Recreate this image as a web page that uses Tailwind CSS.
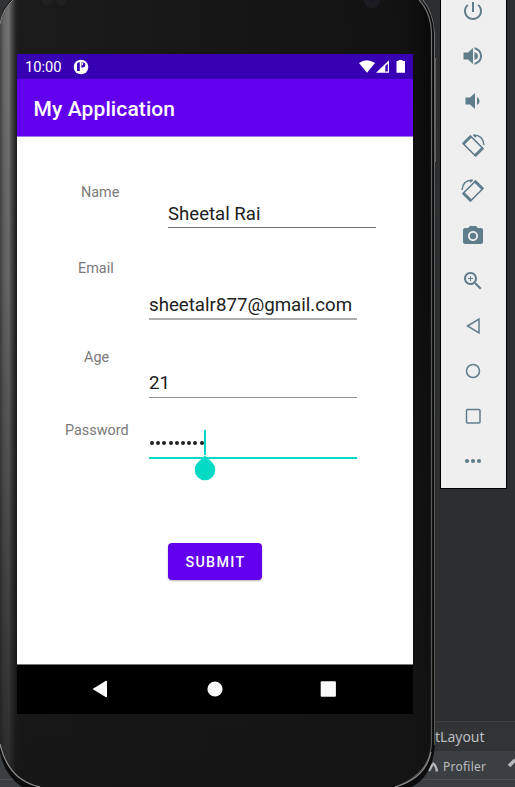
<!DOCTYPE html>
<html lang="en">
<head>
<meta charset="utf-8">
<title>My Application</title>
<script src="https://cdn.jsdelivr.net/npm/@tailwindcss/browser@4"></script>
</head>
<body class="relative w-[515px] h-[787px] overflow-hidden bg-[#2d2e30] font-['Roboto',sans-serif]">

<!-- IDE window behind the emulator -->
<div class="flex flex-col justify-end h-full font-['Noto_Sans',sans-serif] text-[#bbbdbf]">
  <div class="h-[30px] border-t border-[#3f4042] bg-[#313335] flex items-center pl-[435px] text-[14px] leading-none"><span>tLayout</span></div>
  <div class="h-[28px] bg-[#3c3f41] flex items-center pl-[427px] pt-[3px] text-[12px] leading-none">
    <svg class="w-[12px] h-[14px] shrink-0" viewBox="0 0 12 14" fill="none" stroke="#b4b8ba" stroke-width="2.400"><path d="M2 11L5.500 4.500M5.500 3Q9 5 10 11.500"/></svg>
    <span class="ml-[4px] tracking-[0.250px]">Profiler</span>
    <svg class="w-[8px] h-[14px] ml-auto mb-[5px] shrink-0" viewBox="0 0 8 14" fill="none" stroke="#b4b8ba" stroke-width="3.500"><path d="M2 9L8 3"/></svg>
  </div>
  <div class="h-[8px] border-t border-[#4d4f50] bg-[#3c3f41]"></div>
</div>

<!-- Phone body -->
<svg class="absolute inset-0" width="440" height="787" viewBox="0 0 440 787">
  <defs>
    <linearGradient id="side" x1="0" x2="432" y1="0" y2="0" gradientUnits="userSpaceOnUse">
      <stop offset="0" stop-color="#444"/><stop offset=".009" stop-color="#686868"/><stop offset=".020" stop-color="#747474"/><stop offset=".028" stop-color="#484848"/><stop offset=".037" stop-color="#222"/><stop offset=".045" stop-color="#1b1b1b"/><stop offset=".94" stop-color="#121212"/><stop offset="1" stop-color="#080808"/>
    </linearGradient>
    <linearGradient id="fade" x1="0" x2="0" y1="0" y2="1">
      <stop offset="0" stop-color="#1a1a1a" stop-opacity="0"/><stop offset=".35" stop-color="#1a1a1a" stop-opacity=".15"/><stop offset="1" stop-color="#151515" stop-opacity=".78"/>
    </linearGradient>
    <linearGradient id="edge" x1="0" x2="0" y1="0" y2="1">
      <stop offset="0" stop-color="#757575"/><stop offset=".25" stop-color="#606060"/><stop offset="1" stop-color="#585655"/>
    </linearGradient>
  </defs>
  <path d="M0 0H12Q3 6 0 22Z" fill="#303234"/>
  <path d="M12 0H420Q435 12 435 32V742Q434 775 412 787H22Q4 775 0 752V22Q3 6 12 0Z" fill="#0b0b0b"/>
  <path d="M13 0H419Q431 12 432 32V742Q430 775 393 787H40Q8 780 0 742V24Q4 8 13 0Z" fill="url(#side)"/>
  <path d="M13 0H419Q431 12 432 32V742Q430 775 393 787H40Q8 780 0 742V24Q4 8 13 0Z" fill="url(#fade)"/>
  <path d="M0 24Q3 8 13 0" fill="none" stroke="#8a8a8a"/>
  <path d="M419 0Q431 12 431.500 34V742Q431 774 395 787" fill="none" stroke="url(#edge)" stroke-width="1.200"/>
  <path d="M423 0Q434 14 434.500 34V745" fill="none" stroke="url(#edge)"/>
  <path d="M0 744Q8 780 40 787" fill="none" stroke="#8a8a8a" stroke-width="1.300"/>
  <path d="M431 752Q426 778 395 787" fill="none" stroke="#888" stroke-width="1.200"/>
  <path d="M435.500 58V162" stroke="#626262"/>
  <circle cx="372" cy="0" r="8.500" fill="#1c1b1f"/><circle cx="372" cy="0" r="2" fill="#191728"/>
  <circle cx="47" cy="0" r="5.500" fill="#202020"/><circle cx="61" cy="0" r="5.500" fill="#202020"/>
</svg>

<!-- Phone screen -->
<main class="absolute left-[17px] top-[54px] w-[396px] h-[660px] flex flex-col bg-white">
  <div class="h-[25px] shrink-0 bg-[#3700b3] flex items-center pl-[8px] pr-[7px] text-white">
    <span class="text-[14.700px] leading-none pt-[2px]">10:00</span>
    <svg class="w-[16px] h-[16px] ml-[11px]" viewBox="0 0 16 16"><circle cx="8" cy="8" r="7.300" fill="#fff"/><path d="M4 4.500Q5 3.300 6.800 3.300V12H4Z" fill="#3700b3"/><path d="M8.400 3.600H10A2.400 2.400 0 0 1 10 8.400H8.400Z" fill="#3700b3"/><circle cx="9.300" cy="5" r=".9" fill="#fff"/></svg>
    <svg class="w-[48px] h-[15px] ml-auto" viewBox="0 0 48 15" fill="#fff"><path d="M1 4Q8.500 -1.500 17 4L9 13.800Z"/><path fill-rule="evenodd" d="M31 1.200V13.800H18ZM29.800 4.500L27.300 7V12.600H29.800Z"/><path d="M38.500 2H40.500V1H44.500V2H47V13.800H38.500Z"/></svg>
  </div>
  <header class="h-[58px] shrink-0 bg-[#6200ee] border-b border-[#9d78e0] flex items-center pl-[16.600px] text-white text-[21px] font-medium tracking-[0.100px] leading-none pt-[3px]">My Application</header>

  <form class="flex-1 flex flex-col text-[#212121]">
    <div class="flex h-[46px] mt-[45px]">
      <label class="w-[151px] pl-[64px] text-[14.400px] leading-[22px] text-[#7a7a7a]">Name</label>
      <div class="w-[208px] flex flex-col justify-end border-b border-[#757575] text-[18.600px] leading-[26px]">Sheetal Rai</div>
    </div>
    <div class="flex h-[62px] mt-[30px]">
      <label class="w-[132px] pl-[61px] text-[14.400px] leading-[22px] text-[#7a7a7a]">Email</label>
      <div class="w-[208px] flex flex-col justify-end border-b-2 border-[#adadad] text-[18.700px] leading-[26px]">sheetalr877@gmail.com</div>
    </div>
    <div class="flex h-[51px] mt-[27px]">
      <label class="w-[132px] pl-[67px] text-[14.400px] leading-[22px] text-[#7a7a7a]">Age</label>
      <div class="w-[208px] flex flex-col justify-end border-b border-[#909090] text-[18.700px] leading-[28px]">21</div>
    </div>
    <div class="flex h-[39px] mt-[22px]">
      <label class="w-[132px] pl-[48px] text-[14.400px] leading-[22px] text-[#7a7a7a]">Password</label>
      <div class="relative w-[208px] border-b-2 border-[#03dac5] pl-[1px] pt-[21px]">
        <div class="flex gap-[2.200px]">
          <i class="size-[4px] rounded-full bg-[#212121]"></i><i class="size-[4px] rounded-full bg-[#212121]"></i><i class="size-[4px] rounded-full bg-[#212121]"></i><i class="size-[4px] rounded-full bg-[#212121]"></i><i class="size-[4px] rounded-full bg-[#212121]"></i><i class="size-[4px] rounded-full bg-[#212121]"></i><i class="size-[4px] rounded-full bg-[#212121]"></i><i class="size-[4px] rounded-full bg-[#212121]"></i><i class="size-[4px] rounded-full bg-[#212121]"></i>
        </div>
        <span class="absolute left-[55px] top-[10px] w-[2px] h-[25px] bg-[#03dac5]"></span>
        <svg class="absolute left-[45px] top-[35px] w-[22px] h-[26px]" viewBox="0 0 22 26"><path d="M11 .500L18.300 7.600A10.300 10.300 0 1 1 3.700 7.600Z" fill="#03dac5"/></svg>
      </div>
    </div>
    <button type="button" class="ml-[151px] mt-[84px] w-[94px] h-[37px] rounded-[4px] bg-[#6200ee] text-white text-[14.300px] font-medium tracking-[1.350px] leading-none shadow-[0_1px_2px_rgba(0,0,0,0.3)] pt-[1px] pl-[1px]">SUBMIT</button>
  </form>

  <nav class="h-[50px] shrink-0 bg-black border-t border-[#777] flex items-center pb-[1px]">
    <svg class="w-[16px] h-[18px] ml-[75px]" viewBox="0 0 16 18" fill="#fafafa"><path d="M.500 9L14 .800Q15 .500 15 1.500V16.500Q15 17.500 14 17.200Z"/></svg>
    <svg class="w-[16px] h-[16px] ml-[99px]" viewBox="0 0 16 16" fill="#fafafa"><circle cx="8" cy="8" r="7.600"/></svg>
    <svg class="w-[16px] h-[16px] ml-[97px]" viewBox="0 0 16 16" fill="#fafafa"><rect x=".7" y=".3" width="15.200" height="15.400" rx="1"/></svg>
  </nav>
</main>

<!-- Emulator tool strip -->
<aside class="absolute left-[440px] top-[-13px] w-[67px] h-[502px] border border-black bg-[#efefef] pr-[1px] flex flex-col items-center text-[#607d8b]">
  <div class="h-[45px] flex items-center"><svg class="size-6" viewBox="0 0 24 24" fill="currentColor"><path d="M13 3h-2v10h2V3zm4.830 2.170l-1.420 1.420C17.990 7.860 19 9.810 19 12c0 3.870-3.130 7-7 7s-7-3.130-7-7c0-2.190 1.010-4.140 2.580-5.420L6.170 5.170C4.230 6.820 3 9.260 3 12c0 4.970 4.030 9 9 9s9-4.030 9-9c0-2.740-1.230-5.180-3.170-6.830z"/></svg></div>
  <div class="h-[45px] flex items-center"><svg class="size-6" viewBox="0 0 24 24" fill="currentColor"><path d="M2.500 8.500v7h4.500l5 4.500V4L7 8.500H2.500zM17 12c0-1.770-1.020-3.290-3.500-4.030v8.050c2.480-.73 3.500-2.250 3.500-4.020zM13.500 3.230v2.060c3.390.86 5.500 3.540 5.500 6.710s-2.110 5.850-5.500 6.710v2.060c4.510-.91 7.500-4.490 7.500-8.770s-2.990-7.860-7.500-8.770z"/></svg></div>
  <div class="h-[45px] flex items-center"><svg class="size-6" viewBox="0 0 24 24" fill="currentColor"><path d="M18.500 12c0-1.770-1.020-3.290-2.500-4.030v8.050c1.480-.73 2.500-2.250 2.500-4.020zM4.500 8.500v7H9l5 4.500V4L9 8.500H4.500z"/></svg></div>
  <div class="h-[45px] flex items-center pt-[1px]"><svg class="size-6 overflow-visible" viewBox="0 0 24 24" fill="none" stroke="currentColor" stroke-linejoin="round"><path stroke-width="1.700" d="M9.500 2L22 14.500L14.500 22L2 9.500Z"/><path stroke-width="2.800" stroke-linecap="round" d="M3 9.300L9.300 3M14.700 21L21 14.700"/><path stroke-width="1.500" d="M12.500 1Q22 1 23 11"/><path stroke-width="1.600" d="M12.500 1L15 3.200"/></svg></div>
  <div class="h-[45px] flex items-center pt-[1px]"><svg class="size-6 overflow-visible -scale-x-100" viewBox="0 0 24 24" fill="none" stroke="currentColor" stroke-linejoin="round"><path stroke-width="1.700" d="M9.500 2L22 14.500L14.500 22L2 9.500Z"/><path stroke-width="2.800" stroke-linecap="round" d="M3 9.300L9.300 3M14.700 21L21 14.700"/><path stroke-width="1.500" d="M12.500 1Q22 1 23 11"/><path stroke-width="1.600" d="M12.500 1L15 3.200"/></svg></div>
  <div class="h-[45px] flex items-center"><svg class="size-6" viewBox="0 0 24 24" fill="currentColor"><circle cx="12" cy="12" r="3.200"/><path d="M9 2L7.170 4H4c-1.100 0-2 .9-2 2v12c0 1.100.9 2 2 2h16c1.100 0 2-.9 2-2V6c0-1.100-.9-2-2-2h-3.170L15 2H9zm3 15c-2.760 0-5-2.240-5-5s2.240-5 5-5 5 2.240 5 5-2.240 5-5 5z"/></svg></div>
  <div class="h-[45px] flex items-center"><svg class="size-6" viewBox="0 0 24 24" fill="currentColor"><path d="M15.500 14h-.79l-.28-.27C15.410 12.590 16 11.110 16 9.500 16 5.910 13.090 3 9.500 3S3 5.910 3 9.500 5.910 16 9.500 16c1.610 0 3.090-.59 4.230-1.570l.27.28v.79l5 4.990L20.490 19l-4.990-5zm-6 0C7.010 14 5 11.990 5 9.500S7.010 5 9.500 5 14 7.010 14 9.500 11.990 14 9.500 14zM12 10h-2v2H9v-2H7V9h2V7h1v2h2v1z"/></svg></div>
  <div class="h-[45px] flex items-center"><svg class="size-6" viewBox="0 0 24 24" fill="none" stroke="currentColor" stroke-width="1.500"><path d="M6.500 12L18 5V19Z"/></svg></div>
  <div class="h-[45px] flex items-center"><svg class="size-6" viewBox="0 0 24 24" fill="none" stroke="currentColor" stroke-width="1.500"><circle cx="12" cy="12" r="6.500"/></svg></div>
  <div class="h-[45px] flex items-center"><svg class="size-6" viewBox="0 0 24 24" fill="none" stroke="currentColor" stroke-width="1.500"><rect x="5.500" y="5.500" width="13.500" height="13.500" rx="1"/></svg></div>
  <div class="h-[45px] flex items-center"><svg class="size-6" viewBox="0 0 24 24" fill="currentColor"><circle cx="6" cy="12" r="2.100"/><circle cx="12" cy="12" r="2.100"/><circle cx="18" cy="12" r="2.100"/></svg></div>
</aside>
</body>
</html>
